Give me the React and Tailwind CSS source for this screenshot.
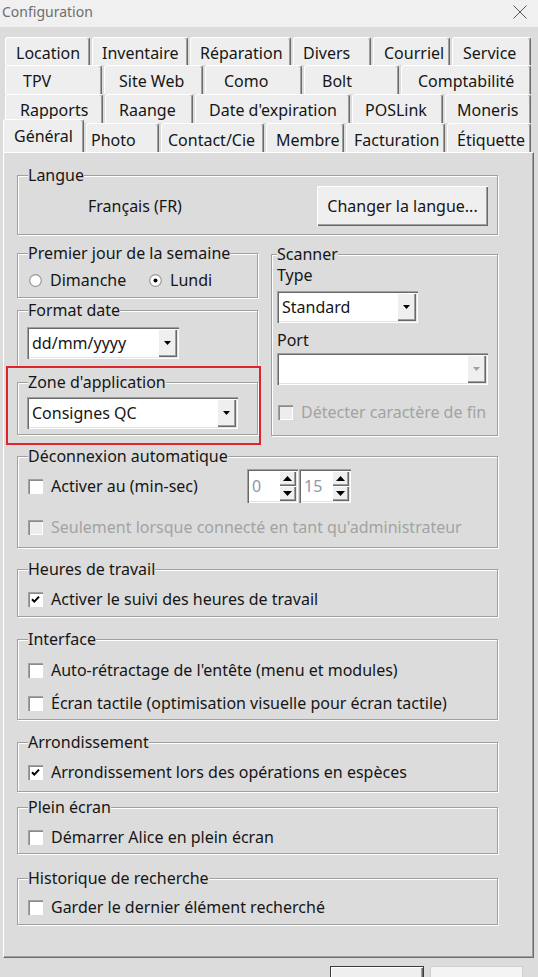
import React from "react";

const TAB_ROWS = [
  {
    h: "h-[28px]",
    tabs: [
      ["Location", "w-[85px] pl-[10px]"],
      ["Inventaire", "w-[96px] pl-[9px]"],
      ["Réparation", "w-[101px] pl-[9px]"],
      ["Divers", "w-[78px] pl-[9px]"],
      ["Courriel", "w-[77px] pl-[10px]"],
      ["Service", "w-[79px] pl-[10px]"],
    ],
  },
  {
    h: "h-[29px]",
    tabs: [
      ["TPV", "w-[97px] pl-[17px]"],
      ["Site Web", "w-[99px] pl-[14px]"],
      ["Como", "w-[97px] pl-[18px]"],
      ["Bolt", "w-[95px] pl-[17px]"],
      ["Comptabilité", "w-[130px] pl-[16px]"],
    ],
  },
  {
    h: "h-[29px]",
    tabs: [
      ["Rapports", "w-[98px] pl-[14px]"],
      ["Raange", "w-[88px] pl-[13px]"],
      ["Date d'expiration", "w-[155px] pl-[13px]"],
      ["POSLink", "w-[91px] pl-[12px]"],
      ["Moneris", "w-[86px] pl-[11px]"],
    ],
  },
];

const FRONT_ROW = [
  ["Photo", "w-[73px] pl-[4px]"],
  ["Contact/Cie", "w-[103px] pl-[6px]"],
  ["Membre", "w-[78px] pl-[9px]"],
  ["Facturation", "w-[99px] pl-[7px]"],
  ["Étiquette", "w-[84px] pl-[9px]"],
];

const tabFace =
  "shrink-0 flex items-center pt-[2px] bg-[#eeeeee] rounded-t-[3px] border-t border-l border-white border-r border-r-[#6b6b6b] shadow-[inset_-1px_0_0_#a0a0a0]";

const sunken =
  "shadow-[inset_1px_1px_0_#a0a0a0,inset_2px_2px_0_#696969,inset_-1px_-1px_0_#ffffff,inset_-2px_-2px_0_#e3e3e3]";

const raised =
  "shadow-[inset_1px_1px_0_#ffffff,inset_-1px_-1px_0_#696969,inset_-2px_-2px_0_#a0a0a0]";

function Group({ title, cls = "", labelCls = "ml-[10px]", children }) {
  return (
    <div className={`border border-[#a0a0a0] shadow-[inset_1px_1px_0_#fff,1px_1px_0_#fff] ${cls}`}>
      <div className={`-mt-[11px] w-fit bg-[#dcdcdc] leading-[20px] ${labelCls}`}>{title}</div>
      {children}
    </div>
  );
}

function Check({ checked, disabled }) {
  return (
    <span
      className={`w-[15px] h-[15px] shrink-0 flex items-center justify-center ${
        disabled ? "bg-[#ededed]" : "bg-white"
      } shadow-[inset_1px_1px_0_#a0a0a0,inset_2px_2px_0_#8a8a8a,inset_-1px_-1px_0_#ffffff]`}
    >
      {checked && (
        <svg width="9" height="9" viewBox="0 0 9 9">
          <path d="M1 4.2 3.3 6.6 8 1.6" stroke="#000" strokeWidth="2" fill="none" />
        </svg>
      )}
    </span>
  );
}

function CheckRow({ checked, disabled, cls = "", children }) {
  return (
    <div className={`flex items-center h-[20px] gap-[8px] ${disabled ? "text-[#a3a3a3]" : ""} ${cls}`}>
      <Check checked={checked} disabled={disabled} />
      <span className="whitespace-nowrap">{children}</span>
    </div>
  );
}

function Radio({ checked }) {
  return (
    <svg width="13" height="13" viewBox="0 0 13 13" className="shrink-0">
      <circle cx="6.5" cy="6.5" r="5.8" fill="#fff" stroke="#9a9a9a" strokeWidth="1.2" />
      {checked && <circle cx="6.5" cy="6.5" r="2" fill="#000" />}
    </svg>
  );
}

function Arrow({ up, color = "#000", w = 7, h = 4 }) {
  return (
    <svg width={w} height={h} viewBox={`0 0 ${w} ${h}`}>
      <path d={up ? `M0 ${h}h${w}L${w / 2} 0z` : `M0 0h${w}L${w / 2} ${h}z`} fill={color} />
    </svg>
  );
}

function Combo({ value, cls = "", disabled }) {
  return (
    <div className={`flex bg-white p-[2px] ${sunken} ${cls}`}>
      <div className="flex-1 flex items-center pl-[3px]">{value}</div>
      <div className={`w-[19px] flex items-center justify-center bg-[#efefef] ${raised}`}>
        <Arrow color={disabled ? "#a0a0a0" : "#000"} />
      </div>
    </div>
  );
}

function Spin({ value, cls = "" }) {
  return (
    <div className={`flex bg-white p-[2px] ${sunken} ${cls}`}>
      <div className="flex-1 flex items-center pl-[3px] text-[#8e98a6]">{value}</div>
      <div className="w-[17px] flex flex-col">
        <div className={`flex-1 flex items-center justify-center bg-[#efefef] ${raised}`}>
          <Arrow up w={9} h={5} />
        </div>
        <div className={`flex-1 flex items-center justify-center bg-[#efefef] ${raised}`}>
          <Arrow w={9} h={5} />
        </div>
      </div>
    </div>
  );
}

export default function App() {
  return (
    <div className="w-[538px] h-[977px] overflow-hidden bg-[#dcdcdc] font-['Noto_Sans',sans-serif] text-[16px] leading-[20px] text-[#161616]">
      {/* title bar */}
      <div className="h-[27px] bg-[#f0f0f0] flex items-center justify-between pl-[2px] pr-[11px] pb-[3px] text-[14px] text-[#6e6e6e]">
        <span>Configuration</span>
        <svg width="14" height="14" viewBox="0 0 14 14">
          <path d="M0.5 0.5l13 13M13.5 0.5l-13 13" stroke="#555" strokeWidth="1" />
        </svg>
      </div>

      {/* tabs */}
      <div className="pt-[10px]">
        {TAB_ROWS.map((row, i) => (
          <div key={i} className={`flex gap-[2px] pl-[5px] ${row.h}`}>
            {row.tabs.map(([label, cls]) => (
              <div key={label} className={`${tabFace} ${cls} h-full`}>
                {label}
              </div>
            ))}
          </div>
        ))}
        <div className="flex items-end gap-[2px] pl-[3px] h-[29px]">
          <div className={`${tabFace} w-[81px] pl-[10px] h-[33px] pt-0 pb-[3px]`}>Général</div>
          {FRONT_ROW.map(([label, cls]) => (
            <div key={label} className={`${tabFace} ${cls} h-full pt-[3px]`}>
              {label}
            </div>
          ))}
        </div>
      </div>

      {/* panel */}
      <div className="ml-[3px] w-[531px] h-[806px] bg-[#dcdcdc] border-t border-l border-white border-r border-b border-r-[#6b6b6b] border-b-[#6b6b6b] shadow-[inset_-1px_-1px_0_#a0a0a0] pl-[13px] pt-[22px]">
        <div className="w-[481px]">
          <Group title="Langue" cls="h-[60px]">
            <div className="flex items-center h-[40px] mt-[1px] pl-[70px] pr-[9px]">
              <span>Français (FR)</span>
              <div className={`ml-auto w-[171px] h-[40px] flex items-center justify-center bg-[#efefef] ${raised}`}>
                Changer la langue...
              </div>
            </div>
          </Group>

          <div className="flex items-start gap-[13px] mt-[18px]">
            <div className="w-[241px] shrink-0">
              <Group title="Premier jour de la semaine" cls="h-[45px]">
                <div className="flex items-center h-[20px] mt-[7px] pl-[11px]">
                  <div className="w-[120px] flex items-center gap-[8px]">
                    <Radio />
                    <span>Dimanche</span>
                  </div>
                  <div className="flex items-center gap-[8px]">
                    <Radio checked />
                    <span>Lundi</span>
                  </div>
                </div>
              </Group>

              <Group title="Format date" cls="h-[57px] mt-[12px]">
                <Combo value="dd/mm/yyyy" cls="mt-[7px] ml-[9px] w-[152px] h-[32px]" />
              </Group>

              <div className="relative mt-[15px]">
                <Group title="Zone d'application" cls="h-[53px]">
                  <Combo value="Consignes QC" cls="mt-[5px] ml-[9px] w-[211px] h-[32px]" />
                </Group>
                <div className="absolute -left-[11px] -top-[16px] -right-[3px] -bottom-[10px] border-2 border-[#e0242b]" />
              </div>
            </div>

            <Group title="Scanner" cls="w-[227px] h-[182px] mt-[1px]" labelCls="ml-[5px]">
              <div className="pl-[5px]">
                <div className="mt-[1px]">Type</div>
                <Combo value="Standard" cls="mt-[6px] w-[141px] h-[32px]" />
                <div className="mt-[7px]">Port</div>
                <Combo value="" disabled cls="mt-[3px] w-[211px] h-[32px]" />
                <CheckRow disabled cls="mt-[17px] ml-[1px]">
                  Détecter caractère de fin
                </CheckRow>
              </div>
            </Group>
          </div>

          <Group title="Déconnexion automatique" cls="h-[92px] mt-[20px]">
            <div className="pl-[10px]">
              <div className="flex items-center h-[34px] mt-[3px]">
                <CheckRow cls="w-[219px]">Activer au (min-sec)</CheckRow>
                <Spin value="0" cls="w-[51px] h-[34px]" />
                <Spin value="15" cls="w-[52px] h-[34px] ml-[1px]" />
              </div>
              <CheckRow disabled cls="mt-[14px]">
                Seulement lorsque connecté en tant qu'administrateur
              </CheckRow>
            </div>
          </Group>

          <Group title="Heures de travail" cls="h-[48px] mt-[21px]">
            <CheckRow checked cls="mt-[10px] ml-[10px]">
              Activer le suivi des heures de travail
            </CheckRow>
          </Group>

          <Group title="Interface" cls="h-[81px] mt-[22px]">
            <div className="pl-[10px]">
              <CheckRow cls="mt-[11px]">Auto-rétractage de l'entête (menu et modules)</CheckRow>
              <CheckRow cls="mt-[13px]">Écran tactile (optimisation visuelle pour écran tactile)</CheckRow>
            </div>
          </Group>

          <Group title="Arrondissement" cls="h-[50px] mt-[22px]">
            <CheckRow checked cls="mt-[10px] ml-[10px]">
              Arrondissement lors des opérations en espèces
            </CheckRow>
          </Group>

          <Group title="Plein écran" cls="h-[47px] mt-[15px]">
            <CheckRow cls="mt-[10px] ml-[10px]">Démarrer Alice en plein écran</CheckRow>
          </Group>

          <Group title="Historique de recherche" cls="h-[47px] mt-[24px]">
            <CheckRow cls="mt-[9px] ml-[10px]">Garder le dernier élément recherché</CheckRow>
          </Group>
        </div>
      </div>

      {/* dialog buttons */}
      <div className="flex justify-end gap-[6px] pr-[15px] mt-[8px]">
        <div className={`w-[94px] h-[30px] bg-[#efefef] border border-[#3a3a3a] ${raised}`} />
        <div className={`w-[93px] h-[30px] bg-[#f4f4f4] border border-[#cfcfcf]`} />
      </div>
    </div>
  );
}
